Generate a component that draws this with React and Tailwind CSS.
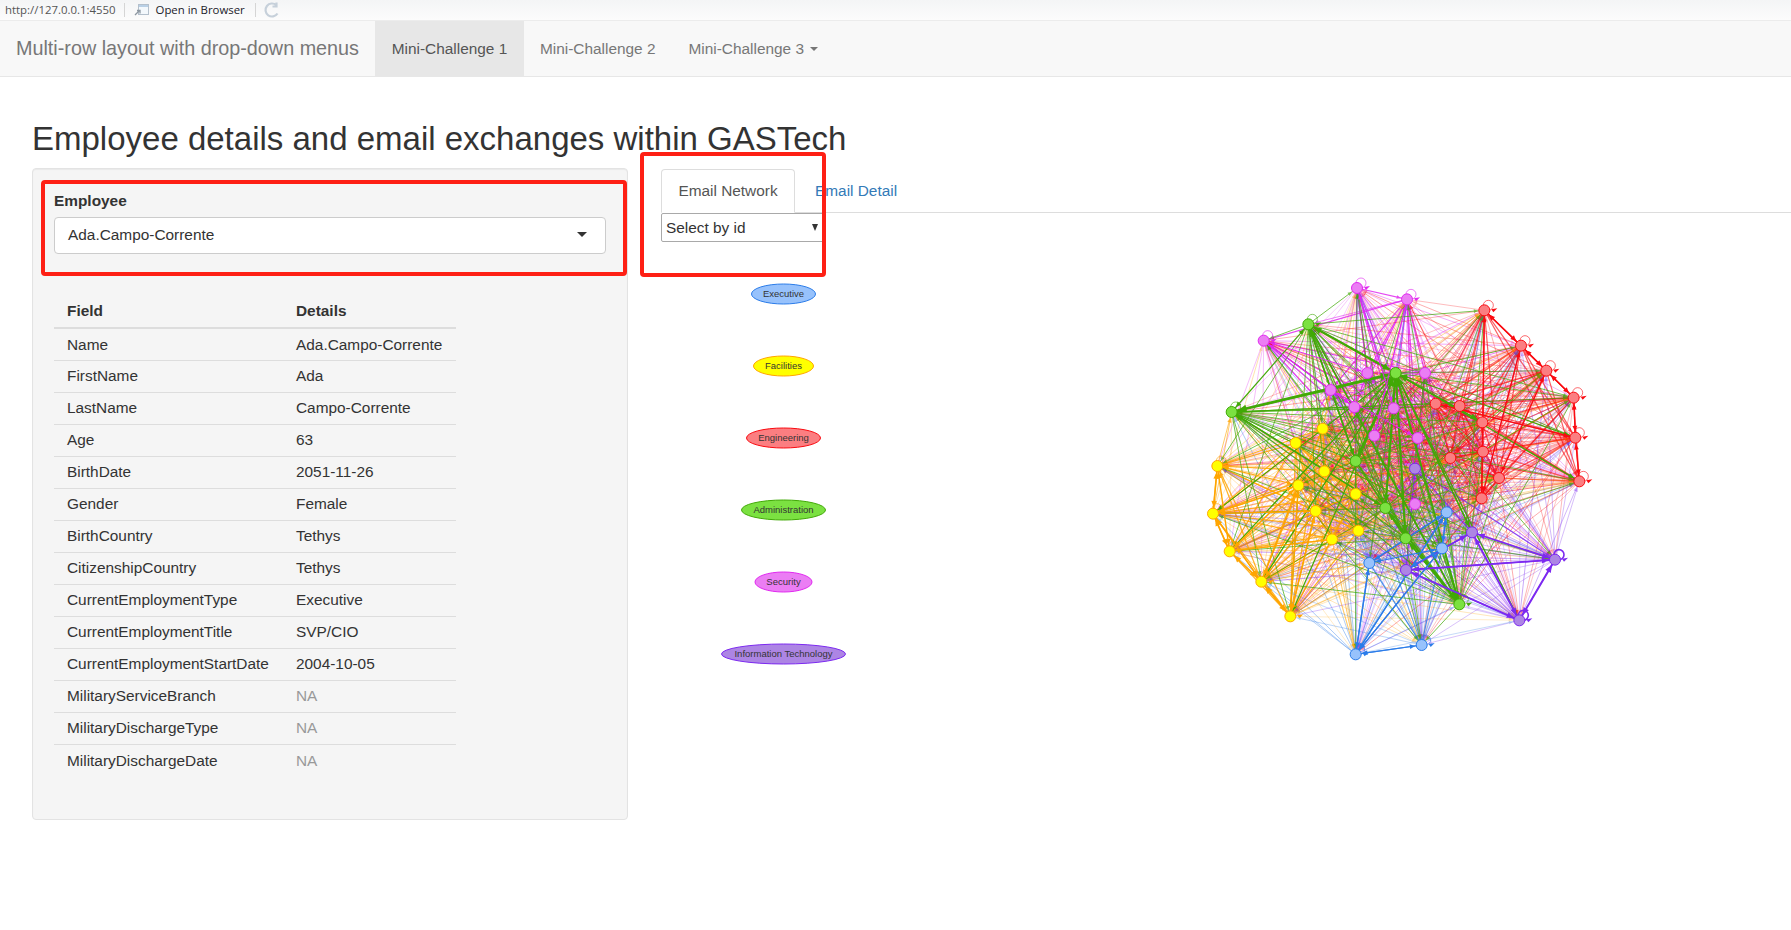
import React from 'react';

const rows = [
  ['Name', 'Ada.Campo-Corrente'],
  ['FirstName', 'Ada'],
  ['LastName', 'Campo-Corrente'],
  ['Age', '63'],
  ['BirthDate', '2051-11-26'],
  ['Gender', 'Female'],
  ['BirthCountry', 'Tethys'],
  ['CitizenshipCountry', 'Tethys'],
  ['CurrentEmploymentType', 'Executive'],
  ['CurrentEmploymentTitle', 'SVP/CIO'],
  ['CurrentEmploymentStartDate', '2004-10-05'],
  ['MilitaryServiceBranch', 'NA'],
  ['MilitaryDischargeType', 'NA'],
  ['MilitaryDischargeDate', 'NA'],
];

// vis.js default group colours
const groups = {
  exec: { border: '#2B7CE9', bg: '#97C2FC', label: 'Executive', w: 64, y: 51 },
  fac: { border: '#FFA500', bg: '#FFFF00', label: 'Facilities', w: 60, y: 123 },
  eng: { border: '#FA0A10', bg: '#FB7E81', label: 'Engineering', w: 74, y: 195 },
  adm: { border: '#41A906', bg: '#7BE141', label: 'Administration', w: 84, y: 267 },
  sec: { border: '#E129F0', bg: '#EB7DF4', label: 'Security', w: 57, y: 339 },
  it: { border: '#7C29F0', bg: '#AD85E4', label: 'Information Technology', w: 124, y: 411 },
};

// node positions read off a 3x crop, so divided by 3 below
const rawNodes = {
  sec: [[531, 84], [681, 118], [251, 242], [562, 339], [735, 339], [452, 390], [523, 441], [641, 445], [583, 527], [713, 534], [705, 732]],
  adm: [[385, 193], [647, 339], [155, 456], [527, 603], [616, 744], [677, 835], [838, 1033]],
  eng: [[913, 151], [1023, 257], [1099, 332], [1181, 413], [1186, 533], [1198, 664], [767, 431], [839, 438], [907, 487], [909, 575], [811, 594], [957, 654], [905, 715]],
  fac: [[428, 506], [347, 549], [112, 618], [433, 634], [355, 676], [527, 702], [99, 761], [407, 753], [535, 812], [456, 838], [149, 874], [244, 965], [331, 1069]],
  exec: [[800, 757], [786, 865], [568, 909], [725, 1155], [527, 1183]],
  it: [[705, 626], [876, 817], [1125, 899], [678, 930], [1018, 1081]],
};

const OX = 519;
const OY = 18;

const nodes = Object.entries(rawNodes).flatMap(([g, pts]) =>
  pts.map(([x, y]) => ({
    g,
    x: OX + x / 3,
    y: OY + y / 3,
    outer: Math.hypot(x - 650, y - 620) > 430,
  }))
);

const find = (x, y) => nodes.find((n) => n.x === OX + x / 3 && n.y === OY + y / 3);

function makeEdges() {
  let seed = 41;
  const rand = () => {
    seed = (seed * 16807) % 2147483647;
    return seed / 2147483647;
  };
  const edges = [];
  for (let i = 0; i < nodes.length; i++) {
    for (let j = i + 1; j < nodes.length; j++) {
      if (rand() > 0.9) continue;
      const flip = rand() > 0.5;
      const a = flip ? nodes[j] : nodes[i];
      const b = flip ? nodes[i] : nodes[j];
      const same = a.g === b.g;
      const adm = a.g === 'adm';
      const near = Math.hypot(a.x - b.x, a.y - b.y) < 120;
      const warm = (a.g === 'fac' || a.g === 'sec') && near;
      edges.push({
        a,
        b,
        width: same ? 1.2 : adm ? 1 : 0.9,
        opacity: same ? (a.g === 'eng' ? 0.65 : 0.85) : adm ? 0.7 : warm ? 0.65 : 0.22 + rand() * 0.22,
      });
    }
  }
  // administration edges sit on top of the pile
  return edges.sort((p, q) => (p.a.g === 'adm') - (q.a.g === 'adm'));
}

const strong = [
  // administration hub
  [[647, 339], [385, 193], 2.2], [[647, 339], [155, 456], 2.8], [[647, 339], [838, 1033], 1.8],
  [[647, 339], [527, 603], 2], [[647, 339], [616, 744], 2], [[647, 339], [677, 835], 2],
  [[647, 339], [907, 487], 1.6], [[647, 339], [1186, 533], 1.2], [[647, 339], [1198, 664], 1.2],
  [[385, 193], [838, 1033], 1.6], [[385, 193], [527, 603], 1.6], [[155, 456], [616, 744], 1.4],
  [[155, 456], [385, 193], 1.2], [[647, 339], [244, 965], 1.2], [[647, 339], [331, 1069], 1.2],
  [[647, 339], [149, 874], 1.2], [[647, 339], [876, 817], 1.6], [[647, 339], [99, 761], 1],
  [[616, 744], [838, 1033], 2], [[677, 835], [838, 1033], 1.8], [[647, 339], [1018, 1081], 1.2],
  // security
  [[251, 242], [562, 339], 1], [[251, 242], [523, 441], 1], [[531, 84], [641, 445], 1],
  [[681, 118], [583, 527], 1], [[452, 390], [713, 534], 1],
  // engineering
  [[913, 151], [1023, 257], 1.4], [[1023, 257], [1099, 332], 1.4], [[1099, 332], [1181, 413], 1.4],
  [[1181, 413], [1186, 533], 1.2], [[1186, 533], [1198, 664], 1.2], [[913, 151], [905, 715], 1.2],
  [[1023, 257], [905, 715], 1.2], [[1099, 332], [957, 654], 1.2], [[767, 431], [1186, 533], 1.2],
  // facilities
  [[112, 618], [99, 761], 1.6], [[99, 761], [149, 874], 1.6], [[149, 874], [244, 965], 1.8],
  [[244, 965], [331, 1069], 2], [[112, 618], [149, 874], 1.4], [[99, 761], [244, 965], 1.4],
  [[244, 965], [355, 676], 1.4], [[331, 1069], [355, 676], 1.4], [[99, 761], [407, 753], 1.4],
  [[149, 874], [355, 676], 1.2], [[244, 965], [407, 753], 1.2], [[331, 1069], [407, 753], 1.2],
  [[112, 618], [355, 676], 1], [[99, 761], [355, 676], 1.2], [[149, 874], [456, 838], 1],
  // it
  [[876, 817], [1125, 899], 1.8], [[678, 930], [1125, 899], 1.8], [[876, 817], [1018, 1081], 1.8],
  [[678, 930], [1018, 1081], 1.8], [[1125, 899], [1018, 1081], 2], [[678, 930], [876, 817], 1.8],
  // executive
  [[800, 757], [568, 909], 1.2], [[786, 865], [568, 909], 1.2], [[568, 909], [527, 1183], 1.3],
  [[725, 1155], [527, 1183], 1.2], [[800, 757], [527, 1183], 1.3], [[786, 865], [527, 1183], 1.3],
  [[800, 757], [786, 865], 1.4], [[786, 865], [678, 930], 1.4],
];

function arrow(a, b, size) {
  const dx = b.x - a.x;
  const dy = b.y - a.y;
  const len = Math.hypot(dx, dy) || 1;
  const ux = dx / len;
  const uy = dy / len;
  const tx = b.x - ux * 6.5;
  const ty = b.y - uy * 6.5;
  const bx = tx - ux * size;
  const by = ty - uy * size;
  const s = size * 0.45;
  return `${tx},${ty} ${bx - uy * s},${by + ux * s} ${bx + uy * s},${by - ux * s}`;
}

function NetworkGraph() {
  const edges = makeEdges();
  return (
    <svg width="1130" height="470" className="block">
      {Object.entries(groups).map(([k, g]) => (
        <g key={k}>
          <ellipse cx="122.5" cy={g.y + 1} rx={g.w / 2} ry="10" fill={g.bg} stroke={g.border} />
          <text x="122.5" y={g.y + 4} textAnchor="middle" fontSize="9.5" fill="#343434" fontFamily="Liberation Sans, Arial, sans-serif">
            {g.label}
          </text>
        </g>
      ))}
      {edges.map((e, i) => (
        <g key={i} opacity={e.opacity}>
          <line x1={e.a.x} y1={e.a.y} x2={e.b.x} y2={e.b.y} stroke={groups[e.a.g].border} strokeWidth={e.width} />
          <polygon points={arrow(e.a, e.b, 4)} fill={groups[e.a.g].border} />
        </g>
      ))}
      {strong.map(([p, q, w], i) => {
        const a = find(p[0], p[1]);
        const b = find(q[0], q[1]);
        const c = groups[a.g].border;
        return (
          <g key={i}>
            <line x1={a.x} y1={a.y} x2={b.x} y2={b.y} stroke={c} strokeWidth={w} />
            <polygon points={arrow(b, a, 3 + w * 2)} fill={c} />
            <polygon points={arrow(a, b, 3 + w * 2)} fill={c} />
          </g>
        );
      })}
      {nodes.map((n, i) => (
        <g key={i}>
          {n.outer && (
            <>
              <circle
                cx={n.x + 4}
                cy={n.y - 5}
                r="5"
                fill="none"
                stroke={groups[n.g].border}
                strokeOpacity={n.g === 'it' ? 1 : 0.6}
                strokeWidth={n.g === 'it' ? 1.6 : 1}
              />
              <polygon
                points={`${n.x + 7},${n.y - 1} ${n.x + 13},${n.y - 2} ${n.x + 9},${n.y + 2}`}
                fill={groups[n.g].border}
              />
            </>
          )}
          <circle cx={n.x} cy={n.y} r="5.5" fill={groups[n.g].bg} stroke={groups[n.g].border} />
        </g>
      ))}
    </svg>
  );
}

export default function App() {
  return (
    <div className="relative h-[930px] overflow-hidden bg-white font-['Liberation_Sans',Arial,sans-serif] text-[15.4px] text-[#333]">
      {/* IE host toolbar */}
      <div className="flex h-[21px] items-center border-b border-[#ececec] bg-gradient-to-b from-[#f4f5f6] to-[#fcfcfc]">
        <span className="pl-[5px] font-['Open_Sans',sans-serif] text-[11.4px] text-[#555]">http://127.0.0.1:4550</span>
        <span className="ml-[8px] h-[14px] w-px bg-[#d5d5d5]" />
        <svg width="16" height="14" viewBox="0 0 16 14" className="ml-[9px]">
          <rect x="4.5" y="1.5" width="10" height="10" fill="#f3f8fc" stroke="#b4c0cc" />
          <rect x="5" y="2" width="9" height="2" fill="#b9d0e6" />
          <path d="M1 12l4-4M3 7.5h3v3" stroke="#8d97a1" strokeWidth="1.3" fill="none" />
        </svg>
        <span className="ml-[6px] font-['Open_Sans',sans-serif] text-[11.4px] text-[#1a1a2a]">Open in Browser</span>
        <span className="ml-[10px] h-[14px] w-px bg-[#d5d5d5]" />
        <svg width="18" height="18" viewBox="0 0 18 18" className="ml-[7px]">
          <path d="M14.5 12.5a6.5 6.5 0 1 1 -1.2 -8.4M13.5 1.5v4h-4" stroke="#c6d0da" strokeWidth="2.2" fill="none" />
        </svg>
      </div>

      {/* navbar */}
      <nav className="flex h-[56px] items-stretch border-b border-[#e7e7e7] bg-[#f8f8f8] text-[#777]">
        <a className="flex w-[375px] items-center pl-[16px] text-[19.8px]">Multi-row layout with drop-down menus</a>
        <a className="flex w-[149px] items-center justify-center bg-[#e7e7e7] text-[#555]">Mini-Challenge 1</a>
        <a className="flex items-center px-[16px]">Mini-Challenge 2</a>
        <a className="flex items-center pl-[17px]">
          Mini-Challenge 3
          <span className="ml-[6px] mt-[1px] border-x-[4.5px] border-t-[4.5px] border-x-transparent border-t-[#777]" />
        </a>
      </nav>

      <div className="pl-[32px]">
        <h1 className="mt-[42px] mb-[9px] text-[33px] leading-[40px] font-normal whitespace-nowrap text-[#333]">
          Employee details and email exchanges within GASTech
        </h1>

        <div className="flex items-start">
          {/* sidebar */}
          <div className="h-[652px] w-[596px] shrink-0 rounded border border-[#e3e3e3] bg-[#f5f5f5] pl-[21px] pr-[21px] pt-[22px] shadow-[inset_0_1px_1px_rgba(0,0,0,0.05)]">
            <label className="block leading-[20px] font-bold">Employee</label>
            <div className="mt-[6px] flex h-[37px] items-center justify-between rounded border border-[#ccc] bg-white pb-[2px] pl-[13px] pr-[18px]">
              <span>Ada.Campo-Corrente</span>
              <span className="border-x-[5px] border-t-[5px] border-x-transparent border-t-[#333]" />
            </div>

            <table className="mt-[39px] w-[402px] table-fixed border-collapse">
              <thead>
                <tr className="h-[35px] border-b-2 border-[#ddd] text-left">
                  <th className="w-[242px] pl-[13px] pt-[2px] font-bold">Field</th>
                  <th className="pt-[2px] font-bold">Details</th>
                </tr>
              </thead>
              <tbody>
                {rows.map(([field, value]) => (
                  <tr key={field} className="h-[32px] border-b border-[#ddd] last:border-b-0">
                    <td className="pl-[13px] whitespace-nowrap">{field}</td>
                    <td className={value === 'NA' ? 'text-[#999]' : ''}>{value}</td>
                  </tr>
                ))}
              </tbody>
            </table>
          </div>

          {/* main panel */}
          <div className="ml-[33px] min-w-0 grow">
            <div className="flex h-[45px] border-b border-[#ddd] pt-px">
              <a className="-mb-px flex h-[44px] w-[134px] items-center justify-center rounded-t border border-[#ddd] border-b-white bg-white text-[#555]">
                Email Network
              </a>
              <a className="ml-[20px] flex items-center text-[#337ab7]">Email Detail</a>
            </div>
            <div className="flex h-[29px] w-[163px] items-center justify-between rounded-[2px] border border-[#a9a9a9] bg-white pl-[4px] pr-[5px]">
              <span>Select by id</span>
              <span className="border-x-[3.5px] border-t-[7px] border-x-transparent border-t-[#333]" />
            </div>
            <NetworkGraph />
          </div>
        </div>
      </div>

      {/* annotation boxes drawn over the screenshot */}
      <div className="absolute left-[41px] top-[180px] h-[96px] w-[586px] rounded-[4px] border-[4px] border-[#fe2015]" />
      <div className="absolute left-[640px] top-[152px] h-[125px] w-[186px] rounded-[4px] border-[4px] border-[#fe2015]" />
    </div>
  );
}
